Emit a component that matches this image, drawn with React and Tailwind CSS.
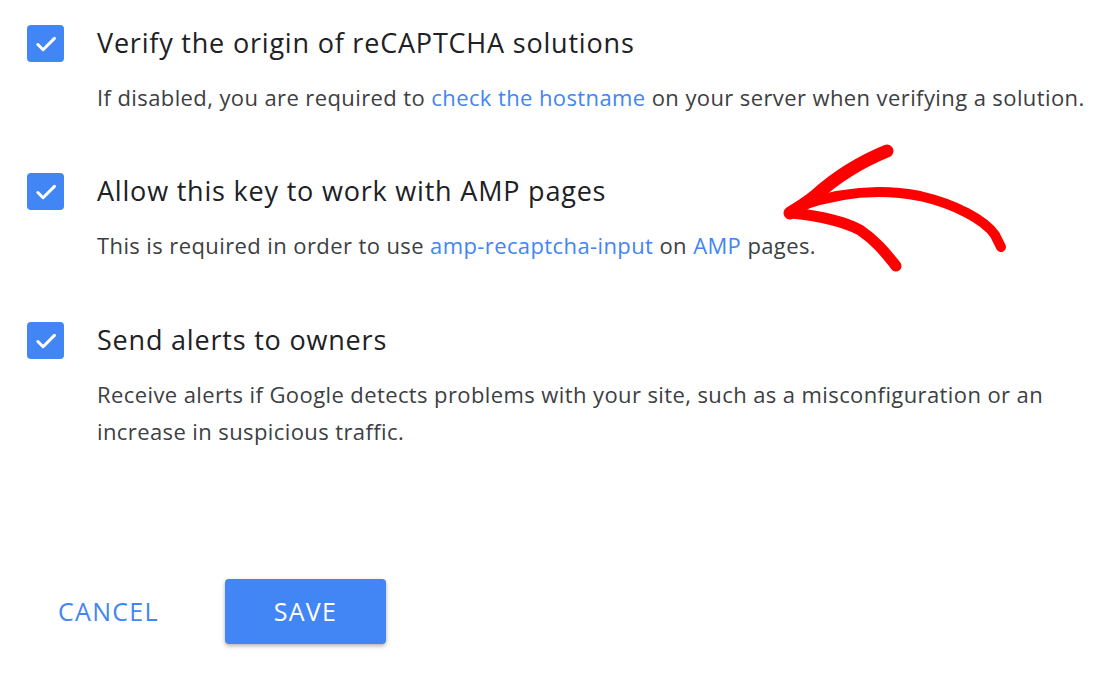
import React from "react";

function Check() {
  return (
    <div className="w-[37px] h-[37px] rounded-[4px] bg-[#4285f4] flex items-center justify-center shrink-0">
      <svg width="26" height="26" viewBox="0 0 24 24" fill="none">
        <path d="M4.5 12.5l4.8 4.8L19.8 6.8" stroke="white" strokeWidth="2.8" strokeLinecap="round" strokeLinejoin="round" />
      </svg>
    </div>
  );
}

function Row({ title, children, className = "" }) {
  return (
    <div className={"flex gap-[33px] " + className}>
      <Check />
      <div className="flex flex-col">
        <div className="text-[27px] leading-[35px] tracking-[0.8px] text-[#202124]">{title}</div>
        <div className="mt-[19px] text-[22px] leading-[37px] tracking-[0.4px] text-[#3c4043]">{children}</div>
      </div>
    </div>
  );
}

const A = ({ children }) => <span className="text-[#4285f4]">{children}</span>;

export default function App() {
  return (
    <div className="relative w-[1116px] h-[676px] bg-white overflow-hidden font-['Open_Sans',sans-serif]">
      <div className="flex flex-col pl-[27px] pt-[25px]">
        <Row title="Verify the origin of reCAPTCHA solutions">
          If disabled, you are required to <A>check the hostname</A> on your server when verifying a solution.
        </Row>
        <Row title="Allow this key to work with AMP pages" className="mt-[57px]">
          This is required in order to use <A>amp-recaptcha-input</A> on <A>AMP</A> pages.
        </Row>
        <Row title="Send alerts to owners" className="mt-[58px]">
          Receive alerts if Google detects problems with your site, such as a misconfiguration or an
          <br />
          increase in suspicious traffic.
        </Row>
        <div className="flex items-center mt-[129px]">
          <button className="w-[161px] text-left pl-[31px] text-[25px] tracking-[1.3px] text-[#4285f4] font-medium">CANCEL</button>
          <button className="ml-[37px] w-[161px] h-[65px] rounded-[4px] bg-[#4285f4] text-white text-[25px] font-medium tracking-[1.3px] shadow-[0_2px_4px_rgba(0,0,0,0.3)]">SAVE</button>
        </div>
      </div>
      <svg className="absolute left-0 top-0 pointer-events-none" width="1116" height="676" viewBox="0 0 1116 676" fill="none">
        <path d="M887 151 C 860 162, 835 178, 815 196 C 805 204, 795 210, 790 213" stroke="#ff0000" strokeWidth="13" strokeLinecap="round" strokeLinejoin="round" />
        <path d="M800 206 C 840 192, 880 188, 920 196 C 955 204, 985 220, 995 235 L 1001 247" stroke="#ff0000" strokeWidth="10" strokeLinecap="round" strokeLinejoin="round" />
        <path d="M792 213 C 820 216, 845 222, 860 230 C 875 240, 885 252, 896 266" stroke="#ff0000" strokeWidth="11" strokeLinecap="round" strokeLinejoin="round" />
      </svg>
    </div>
  );
}
